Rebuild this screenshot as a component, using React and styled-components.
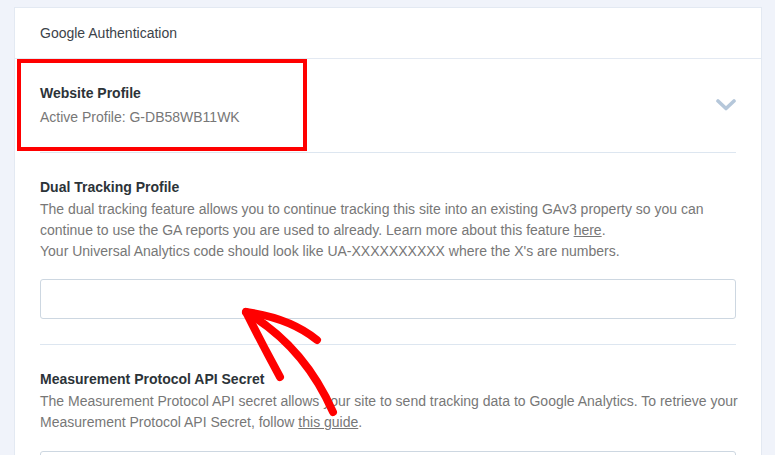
import React from "react";
import styled, { createGlobalStyle } from "styled-components";

const GlobalStyle = createGlobalStyle`
  html, body {
    margin: 0;
    padding: 0;
    background: #f0f3fa;
    font-family: "Liberation Sans", Arial, sans-serif;
    font-size: 14px;
    overflow: hidden;
  }
`;

const Page = styled.div`
  position: relative;
  height: 455px;
  padding: 7px 13px 0 14px;
  box-sizing: border-box;
  overflow: hidden;
`;

const Card = styled.div`
  background: #fff;
  border: 1px solid #e3e9f2;
  border-bottom: none;
  min-height: 600px;
`;

const CardHeader = styled.div`
  height: 50px;
  display: flex;
  align-items: center;
  padding: 0 25px;
  border-bottom: 1px solid #e3e9f2;
  color: #3c434a;
  font-size: 14px;
`;

const Section = styled.div`
  position: relative;
  margin: 0 25px;
  padding: 24px 0 25px;
  border-bottom: ${(p) => (p.last ? "none" : "1px solid #dde6f0")};
  display: ${(p) => (p.row ? "flex" : "block")};
  align-items: center;
  justify-content: space-between;
`;

const Title = styled.div`
  font-weight: bold;
  color: #2c3338;
  line-height: 20px;
`;

const Sub = styled.div`
  color: #777;
  line-height: 20px;
  margin-top: 4px;
`;

const Desc = styled.p`
  margin: 2px -8px 0 0;
  color: #777;
  line-height: 21px;
`;

const Link = styled.a`
  color: #777;
  text-decoration: underline;
`;

const Input = styled.input`
  display: block;
  width: 100%;
  box-sizing: border-box;
  height: 40px;
  margin-top: ${(p) => p.gap}px;
  border: 1px solid #cdd7e1;
  border-radius: 3px;
  background: #fff;
  outline: none;
`;

const Chevron = styled.svg`
  width: 20px;
  height: 12px;
  flex: none;
`;

const Highlight = styled.div`
  position: absolute;
  top: 0;
  left: -23px;
  width: 290px;
  height: 92px;
  border: 4px solid #ff0000;
  box-sizing: border-box;
  pointer-events: none;
`;

const Arrow = styled.svg`
  position: absolute;
  left: 0;
  top: 0;
  pointer-events: none;
`;

export default function App() {
  return (
    <>
      <GlobalStyle />
      <Page>
        <Card>
          <CardHeader>Google Authentication</CardHeader>

          <Section row>
            <div>
              <Title>Website Profile</Title>
              <Sub>Active Profile: G-DB58WB11WK</Sub>
            </div>
            <Chevron viewBox="0 0 20 12">
              <path
                d="M2 2 L10 9.5 L18 2"
                fill="none"
                stroke="#b5c7da"
                strokeWidth="3.6"
                strokeLinecap="round"
                strokeLinejoin="round"
              />
            </Chevron>
            <Highlight />
          </Section>

          <Section>
            <Title>Dual Tracking Profile</Title>
            <Desc>
              The dual tracking feature allows you to continue tracking this site into an existing GAv3 property so you can
              <br />
              continue to use the GA reports you are used to already. Learn more about this feature <Link>here</Link>.
              <br />
              Your Universal Analytics code should look like UA-XXXXXXXXXX where the X's are numbers.
            </Desc>
            <Input gap={17} />
          </Section>

          <Section last>
            <Title>Measurement Protocol API Secret</Title>
            <Desc>
              The Measurement Protocol API secret allows your site to send tracking data to Google Analytics. To retrieve your
              <br />
              Measurement Protocol API Secret, follow <Link>this guide</Link>.
            </Desc>
            <Input gap={18} />
          </Section>
        </Card>

        <Arrow width="775" height="455" viewBox="0 0 775 455">
          <g fill="none" stroke="#ff0000" strokeWidth="8" strokeLinecap="round" strokeLinejoin="round">
            <path d="M246 312 Q 304 346 333 412" />
            <path d="M247 314 Q 262 344 280 377" />
            <path d="M246 312 Q 290 318 317 340" />
          </g>
        </Arrow>
      </Page>
    </>
  );
}
